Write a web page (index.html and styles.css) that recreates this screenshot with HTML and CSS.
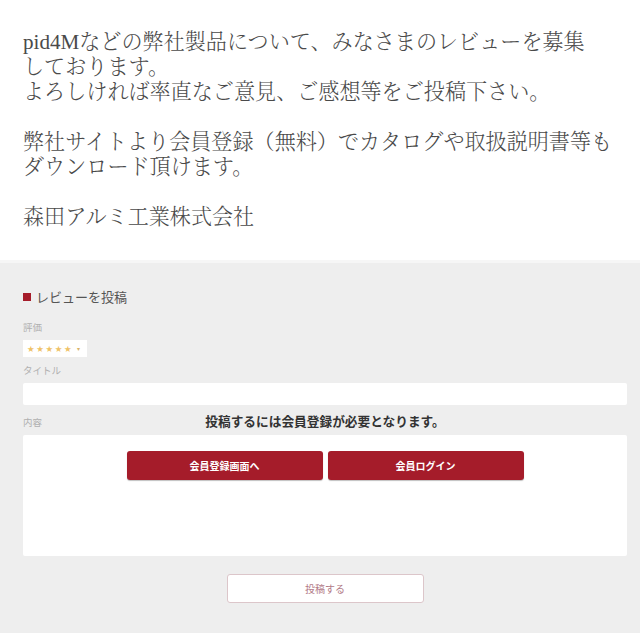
FILE: index.html
```html
<!DOCTYPE html>
<html lang="ja">
<head>
<meta charset="utf-8">
<title>レビュー</title>
<link rel="stylesheet" href="styles.css">
</head>
<body>
<div class="intro">
  <p>pid4Mなどの弊社製品について、みなさまのレビューを募集<br>しております。<br>よろしければ率直なご意見、ご感想等をご投稿下さい。</p>
  <p>弊社サイトより会員登録（無料）でカタログや取扱説明書等も<br>ダウンロード頂けます。</p>
  <p>森田アルミ工業株式会社</p>
</div>
<div class="panel">
  <h2 class="heading"><span class="mark"></span>レビューを投稿</h2>
  <div class="label">評価</div>
  <div class="rating"><span class="stars">★★★★★</span><span class="caret">▾</span></div>
  <div class="label">タイトル</div>
  <div class="input"></div>
  <div class="field">
    <div class="label">内容</div>
    <div class="textarea"></div>
    <div class="gate">
      <div class="gate-msg">投稿するには会員登録が必要となります。</div>
      <div class="gate-btns">
        <a class="btn-red">会員登録画面へ</a>
        <a class="btn-red">会員ログイン</a>
      </div>
    </div>
  </div>
  <div class="submit-row"><a class="submit">投稿する</a></div>
</div>
</body>
</html>
```
FILE: styles.css
```css
html, body {
  margin: 0;
  padding: 0;
  background: #ffffff;
}
body {
  width: 640px;
  height: 640px;
  overflow: hidden;
}
.intro {
  padding: 30px 0 0 23px;
  font-family: "Liberation Serif", "Noto Serif CJK JP", "Noto Sans CJK JP", serif;
  font-size: 21.1px;
  line-height: 25px;
  font-weight: 300;
  color: #4a4a4a;
  height: 230px;
}
.intro p {
  margin: 0 0 25px 0;
  white-space: nowrap;
}
.panel {
  background: #eeeeee;
  border-top: 3px solid #f6f6f6;
  padding: 26px 13px 30px 23px;
  font-family: "Noto Sans CJK JP", "Noto Sans", sans-serif;
}
.heading {
  margin: 0;
  font-size: 13px;
  line-height: 16px;
  font-weight: 400;
  color: #555555;
  display: flex;
  align-items: center;
}
.mark {
  width: 8px;
  height: 8px;
  background: #a51c2a;
  margin-right: 5px;
}
.label {
  font-size: 9.5px;
  line-height: 14px;
  color: #b0b0b0;
  margin-top: 15px;
}
.rating {
  margin-top: 6px;
  width: 64px;
  height: 17px;
  background: #ffffff;
  display: flex;
  align-items: center;
  padding-left: 4px;
  box-sizing: border-box;
}
.stars {
  font-family: "DejaVu Sans", sans-serif;
  font-size: 8.5px;
  letter-spacing: 1.6px;
  color: #efc266;
}
.caret {
  font-family: "DejaVu Sans", sans-serif;
  font-size: 6px;
  color: #d9b36a;
  margin-left: 4px;
}
.rating + .label {
  margin-top: 6px;
}
.input {
  margin-top: 6px;
  height: 22px;
  background: #ffffff;
  border-radius: 2px;
}
.field {
  position: relative;
  margin-top: 10px;
}
.field .label {
  margin-top: 0;
}
.textarea {
  margin-top: 6px;
  height: 121px;
  background: #ffffff;
  border-radius: 2px;
}
.gate {
  position: absolute;
  left: 0;
  right: 0;
  top: -2px;
  display: flex;
  flex-direction: column;
  align-items: center;
}
.gate-msg {
  font-size: 12.7px;
  line-height: 16px;
  font-weight: 700;
  color: #333333;
}
.gate-btns {
  margin-top: 22px;
  display: flex;
  gap: 5px;
}
.btn-red {
  width: 196px;
  height: 29px;
  background: #a51c2a;
  border-radius: 3px;
  box-shadow: 0 1px 1px rgba(0,0,0,0.25);
  color: #ffffff;
  font-size: 10px;
  font-weight: 700;
  display: flex;
  align-items: center;
  justify-content: center;
}
.submit-row {
  margin-top: 18px;
  display: flex;
  justify-content: center;
}
.submit {
  width: 197px;
  height: 29px;
  box-sizing: border-box;
  background: #ffffff;
  border: 1px solid #dcc6ca;
  border-radius: 3px;
  color: #b27a87;
  font-size: 10px;
  display: flex;
  align-items: center;
  justify-content: center;
}
```
